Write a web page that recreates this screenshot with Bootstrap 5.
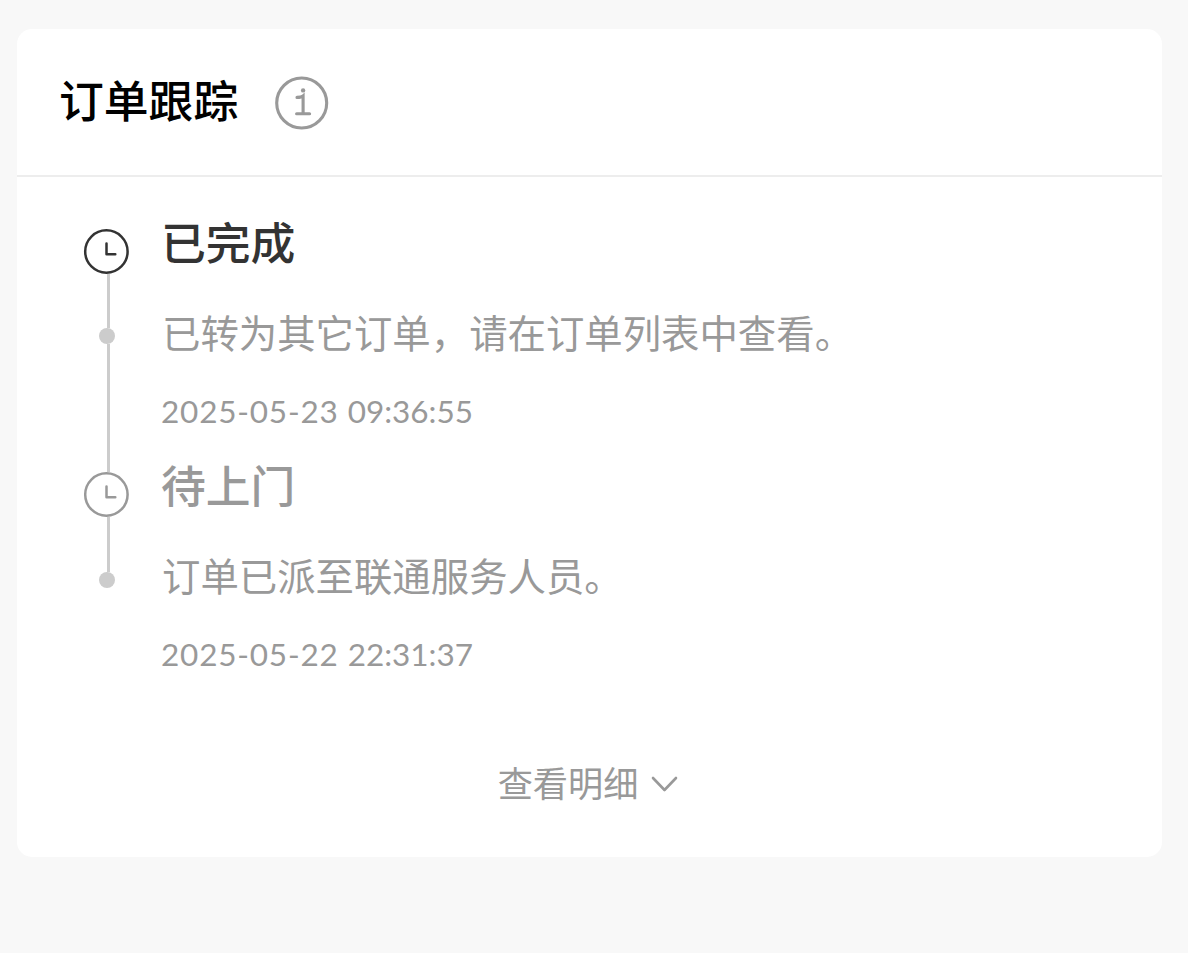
<!DOCTYPE html>
<html lang="zh-CN">
  <head>
    <meta charset="UTF-8" />
    <meta name="viewport" content="width=device-width, initial-scale=1.0" />
    <title>订单跟踪</title>
    <link href="https://cdn.jsdelivr.net/npm/bootstrap@5.3.0/dist/css/bootstrap.min.css" rel="stylesheet" />
    <style>
      body {
        background: #fff;
        color: #999;
        font-family: "Noto Sans CJK SC", sans-serif;
      }
      .page {
        height: 953px;
        padding: 29px 26px 0 17px;
        background: #f8f8f8;
      }
      .track-card {
        height: 828px;
        border-radius: 15px;
      }
      .track-header {
        height: 148px;
        padding: 0 42px;
        gap: 36px;
        border-bottom: 2px solid #ededed;
      }
      .track-header h1 {
        padding-bottom: 6px;
        font-size: 44.8px;
        line-height: 60px;
        color: #000;
      }
      .info-icon {
        margin: 2px 0 0 1px;
      }
      .track-list {
        padding: 35px 42px 0 66px;
      }
      .track-item {
        height: 243px;
        gap: 32px;
      }
      .rail {
        width: 46px;
        padding-top: 17px;
      }
      /* reaches down to the icon of the next step */
      .rail.linked {
        margin-bottom: -17px;
      }
      .rail-line {
        width: 3px;
        margin-left: 24px;
        background: #ccc;
      }
      .rail-line.before-dot {
        height: 55px;
        margin-top: -1px;
      }
      .rail.linked .before-dot {
        height: 54px;
      }
      .rail-dot {
        width: 16px;
        height: 16px;
        margin-left: 16px;
        border-radius: 50%;
        background: #ccc;
      }
      .step-name {
        font-size: 44.8px;
        line-height: 58px;
        margin-bottom: 32px;
      }
      .step-name.active {
        color: #333;
      }
      .step-text {
        padding-left: 1px;
        font-size: 38.4px;
        line-height: 58px;
        margin-bottom: 31px;
      }
      .step-time {
        font-family: Lato, sans-serif;
        font-size: 31.5px;
        line-height: 40px;
        word-spacing: 1px;
      }
      .step-time .day {
        letter-spacing: 0.8px;
      }
      .more-link {
        margin-top: 58px;
        padding-right: 3px;
        gap: 13px;
        font-size: 35.2px;
        line-height: 52px;
        color: #999;
      }
      .more-link svg {
        margin-top: 4px;
      }
    </style>
  </head>
  <body>
    <main class="page">
      <section class="track-card bg-white">
        <header class="track-header d-flex align-items-center">
          <h1 class="fw-medium mb-0">订单跟踪</h1>
          <svg class="info-icon" width="54" height="54" viewBox="0 0 54 54" fill="none" stroke="#999">
            <circle cx="26.7" cy="27" r="25" stroke-width="3.1" />
            <circle cx="28.1" cy="14.4" r="2.2" fill="#999" stroke="none" />
            <path d="M22 21.4C24.5 21.4 27 21 28.1 20V37.8M21.6 37.8H34.6" stroke-width="3.1" stroke-linecap="round" />
          </svg>
        </header>

        <div class="track-list">
          <div class="track-item d-flex">
            <div class="rail linked d-flex flex-column flex-shrink-0">
              <svg class="flex-shrink-0" width="46" height="46" viewBox="0 0 46 46" fill="none" stroke="#333">
                <circle cx="23.4" cy="22.5" r="21.2" stroke-width="2.5" />
                <path d="M23.5 14.5V25.3H32.3" stroke-width="2.5" stroke-linecap="round" stroke-linejoin="round" />
              </svg>
              <div class="rail-line before-dot"></div>
              <div class="rail-dot"></div>
              <div class="rail-line flex-grow-1"></div>
            </div>
            <div>
              <div class="step-name fw-medium active">已完成</div>
              <div class="step-text">已转为其它订单，请在订单列表中查看。</div>
              <div class="step-time"><span class="day">2025-05-23</span> 09:36:55</div>
            </div>
          </div>

          <div class="track-item d-flex">
            <div class="rail d-flex flex-column flex-shrink-0">
              <svg class="flex-shrink-0" width="46" height="46" viewBox="0 0 46 46" fill="none" stroke="#999">
                <circle cx="23.4" cy="22.5" r="21.2" stroke-width="2.5" />
                <path d="M23.5 14.5V25.3H32.3" stroke-width="2.5" stroke-linecap="round" stroke-linejoin="round" />
              </svg>
              <div class="rail-line before-dot"></div>
              <div class="rail-dot"></div>
            </div>
            <div>
              <div class="step-name fw-medium">待上门</div>
              <div class="step-text">订单已派至联通服务人员。</div>
              <div class="step-time"><span class="day">2025-05-22</span> 22:31:37</div>
            </div>
          </div>
        </div>

        <a href="#" class="more-link d-flex justify-content-center align-items-center text-decoration-none">
          <span>查看明细</span>
          <svg width="27" height="16" viewBox="0 0 27 16" fill="none" stroke="#999" stroke-width="2.6" stroke-linecap="round" stroke-linejoin="round">
            <path d="M2 2L13.5 14L25 2" />
          </svg>
        </a>
      </section>
    </main>
    <script src="https://cdn.jsdelivr.net/npm/bootstrap@5.3.0/dist/js/bootstrap.bundle.min.js"></script>
  </body>
</html>
